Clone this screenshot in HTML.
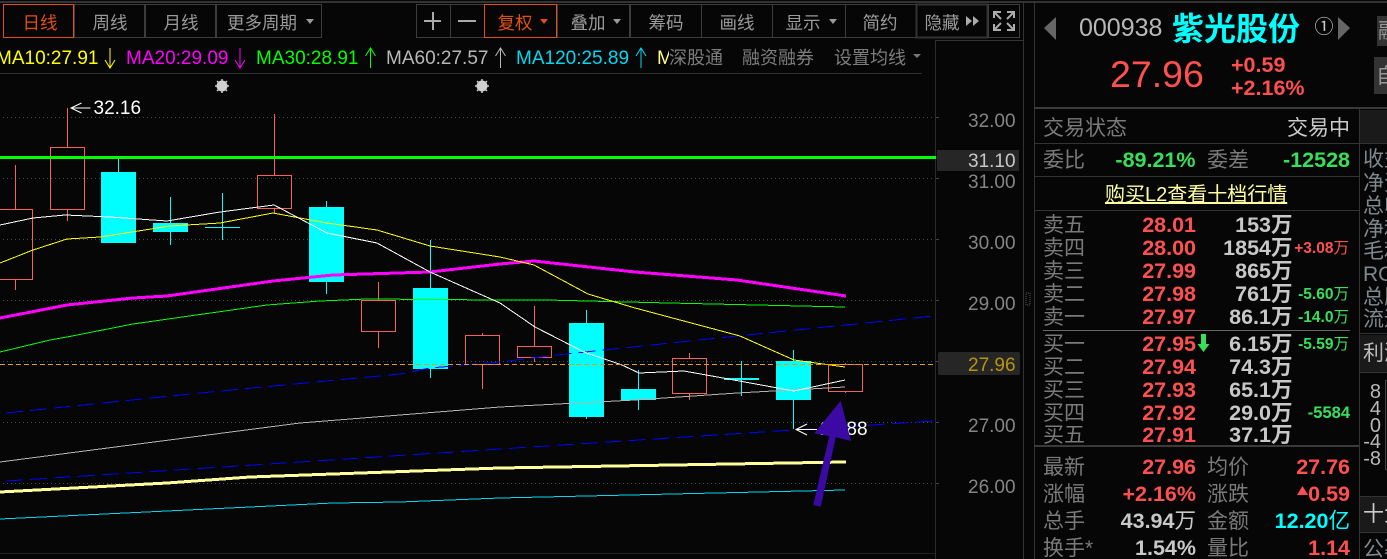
<!DOCTYPE html>
<html><head><meta charset="utf-8">
<style>
html,body{margin:0;padding:0;background:#060606;width:1387px;height:559px;overflow:hidden}
svg{display:block}
text{font-family:"Liberation Sans","Noto Sans CJK SC",sans-serif;white-space:pre}
.l{font-size:21px;fill:#7a7a7a}
.b{font-size:17.5px;fill:#9a9a9a;text-anchor:middle}
.ma{font-size:19px}
.ax{font-size:19px;fill:#858585}
.r{font-size:21.5px;font-weight:bold;fill:#ff5050;text-anchor:end}
.g{font-size:21.5px;font-weight:bold;fill:#38e05a;text-anchor:end}
.w{font-size:21.5px;font-weight:bold;fill:#c8c8c8;text-anchor:end}
.dr{font-size:15.5px;font-weight:bold;fill:#ff5050;text-anchor:end}
.dg{font-size:15.5px;font-weight:bold;fill:#38e05a;text-anchor:end}
.n{font-weight:normal}
.c{font-size:21px;fill:#80888f}
.btn{fill:none;stroke:#3c3c3c}
.rb{fill:none;stroke:#f86060}
.rw{stroke:#f86060}
.cb{fill:#00ffff}
.cw{stroke:#00ffff}
.grid{stroke:#484848;stroke-dasharray:1 3}
polyline{fill:none;shape-rendering:crispEdges}
</style></head><body>
<svg width="1387" height="559" viewBox="0 0 1387 559" xmlns="http://www.w3.org/2000/svg">
<defs>
<clipPath id="rc"><rect x="1360" y="0" width="27" height="559"/></clipPath>
<clipPath id="mc"><rect x="0" y="40" width="669" height="30"/></clipPath>
</defs>
<rect width="1387" height="559" fill="#060606"/>
<rect x="0" y="1" width="1387" height="2" fill="#333"/>

<!-- toolbar -->
<g shape-rendering="crispEdges">
<rect class="btn" x="74.5" y="4.5" width="70" height="33"/>
<rect class="btn" x="145.5" y="4.5" width="70" height="33"/>
<rect class="btn" x="216.5" y="4.5" width="105" height="33"/>
<rect class="btn" x="416.5" y="4.5" width="34" height="33"/>
<rect class="btn" x="450.5" y="4.5" width="34" height="33"/>
<rect class="btn" x="557.5" y="4.5" width="72" height="33"/>
<rect class="btn" x="630.5" y="4.5" width="71" height="33"/>
<rect class="btn" x="701.5" y="4.5" width="71" height="33"/>
<rect class="btn" x="772.5" y="4.5" width="73" height="33"/>
<rect class="btn" x="845.5" y="4.5" width="71" height="33"/>
<rect x="916.5" y="4.5" width="71" height="33" fill="none" stroke="#333" stroke-width="2"/>
<rect class="btn" x="988.5" y="4.5" width="31" height="33"/>
<rect x="3.5" y="4.5" width="70" height="33" fill="none" stroke="#e2500f"/>
<rect x="484.5" y="4.5" width="72" height="33" fill="none" stroke="#e2500f"/>
</g>
<text class="b" x="40" y="29" style="fill:#e2500f">日线</text>
<text class="b" x="110" y="29">周线</text>
<text class="b" x="181" y="29">月线</text>
<text class="b" x="262" y="29">更多周期</text>
<polygon points="306,19 314,19 310,24" fill="#999"/>
<rect x="424" y="20" width="17" height="2" fill="#aaa"/><rect x="432" y="12" width="2" height="18" fill="#aaa"/>
<rect x="458" y="20" width="18" height="2" fill="#aaa"/>
<text class="b" x="515" y="29" style="fill:#e2500f">复权</text>
<polygon points="540,19 548,19 544,24" fill="#e2500f"/>
<text class="b" x="588" y="29">叠加</text>
<polygon points="613,19 621,19 617,24" fill="#999"/>
<text class="b" x="666" y="29">筹码</text>
<text class="b" x="737" y="29">画线</text>
<text class="b" x="803" y="29">显示</text>
<polygon points="829,19 837,19 833,24" fill="#999"/>
<text class="b" x="880" y="29">简约</text>
<text class="b" x="942" y="29">隐藏</text>
<polygon points="966,16 966,26 972,21" fill="#aaa"/><polygon points="973,16 973,26 979,21" fill="#aaa"/>
<g fill="none" stroke="#aaa" stroke-width="2">
<path d="M994 18V12H1001M995 13L1001 19"/>
<path d="M1014 18V12H1007M1013 13L1007 19"/>
<path d="M994 24V30H1001M995 29L1001 23"/>
<path d="M1014 24V30H1007M1013 29L1007 23"/>
</g>

<!-- structure lines -->
<g shape-rendering="crispEdges">
<rect x="935" y="40" width="1" height="519" fill="#2c2c2c"/>
<rect x="935" y="40" width="88" height="1" fill="#333"/>
<rect x="1023" y="3" width="1" height="556" fill="#333"/>
<rect x="1034" y="3" width="1" height="556" fill="#333"/>
<rect x="0" y="73" width="922" height="1" fill="#2e2e2e"/>
<rect x="0" y="553" width="935" height="1" fill="#222"/>
</g>
<g fill="#555"><rect x="1026" y="293" width="4" height="12" fill="none" stroke="#555" stroke-dasharray="1 1"/></g>

<!-- MA row -->
<g clip-path="url(#mc)">
<text class="ma" x="-4" y="64" fill="#ffff00">MA10:27.91</text>
<text class="ma" x="126" y="64" fill="#ff00ff">MA20:29.09</text>
<text class="ma" x="256" y="64" fill="#00ff00">MA30:28.91</text>
<text class="ma" x="386" y="64" fill="#b8b8b8">MA60:27.57</text>
<text class="ma" x="516" y="64" fill="#00d8f0">MA120:25.89</text>
<text class="ma" x="657" y="64" fill="#ffff80">MA</text>
</g>
<g fill="none">
<path d="M110 48V68M105 60L110 68L115 60" stroke="#ffff00"/>
<path d="M240 48V68M235 60L240 68L245 60" stroke="#ff00ff"/>
<path d="M370.500 48V68M365.500 56L370.500 48L375.500 56" stroke="#00ff00"/>
<path d="M500.500 48V68M495.500 56L500.500 48L505.500 56" stroke="#b8b8b8"/>
<path d="M641 48V68M636 56L641 48L646 56" stroke="#00d8f0"/>
</g>
<text x="669" y="64" font-size="18" fill="#7d7d7d">深股通</text>
<text x="742" y="64" font-size="18" fill="#7d7d7d">融资融券</text>
<text x="834" y="64" font-size="18" fill="#7d7d7d">设置均线</text>
<polygon points="913,54 921,54 917,58" fill="#777"/>

<!-- grid -->
<g shape-rendering="crispEdges">
<path class="grid" d="M3 117.500H934M3 178.500H934M3 239.500H934M3 300.500H934M3 361.500H934M3 422.500H934M3 483.500H934"/>
<path stroke="#444" d="M936 117.500H939M936 178.500H939M936 239.500H939M936 300.500H939M936 361.500H939M936 422.500H939M936 483.500H939"/>
</g>

<!-- sun marks -->
<g fill="#d0d0d0" stroke="#d0d0d0">
<g transform="translate(222,86)"><circle r="5"/><path d="M-7 0H7M0 -7V7M-5 -5L5 5M-5 5L5 -5" stroke-width="1.500"/></g>
<g transform="translate(482,86)"><circle r="5"/><path d="M-7 0H7M0 -7V7M-5 -5L5 5M-5 5L5 -5" stroke-width="1.500"/></g>
</g>

<!-- candles -->
<g shape-rendering="crispEdges">
<path class="rw" d="M15.500 165V209M15.500 280V290M67.500 108V147M67.500 210V221M274.500 114V175M274.500 209V214M378.500 282V300M378.500 332V348M482.500 333V335M482.500 364V389M534.500 306V346M534.500 357V362M689.500 353V358M689.500 393V400M845.500 363V365M845.500 392V393"/>
<rect class="rb" x="-5.500" y="209.500" width="38" height="70"/>
<rect class="rb" x="50.500" y="147.500" width="34" height="62"/>
<rect class="rb" x="257.500" y="175.500" width="34" height="33"/>
<rect class="rb" x="361.500" y="300.500" width="34" height="31"/>
<rect class="rb" x="465.500" y="335.500" width="34" height="29"/>
<rect class="rb" x="517.500" y="346.500" width="34" height="11"/>
<rect class="rb" x="672.500" y="358.500" width="34" height="35"/>
<rect class="rb" x="828.500" y="364.500" width="34" height="27"/>
<path class="cw" d="M118.500 158V172M170.500 197V245M222.500 193V240M205 227.500H240M326.500 201V294M430.500 240V378M586.500 310V419M638.500 370V410M741.500 361V396M793.500 350V429"/>
<rect class="cb" x="101" y="172" width="35" height="71"/>
<rect class="cb" x="153" y="223" width="35" height="9"/>
<rect class="cb" x="309" y="207" width="35" height="75"/>
<rect class="cb" x="413" y="288" width="35" height="81"/>
<rect class="cb" x="569" y="323" width="35" height="94"/>
<rect class="cb" x="621" y="389" width="35" height="11"/>
<rect class="cb" x="724" y="378" width="35" height="2"/>
<rect class="cb" x="776" y="361" width="35" height="39"/>
</g>

<!-- MA lines -->
<polyline stroke="#0000ff" stroke-dasharray="17 7" points="6,413 200,393 400,374 430,368 500,362 557,355 737,336 934,316"/>
<polyline stroke="#0000ff" stroke-dasharray="17 7" points="6,481 500,449 793,430 934,421"/>
<polyline stroke="#b4b4b4" points="0,462 300,423 500,407 635,400 737,393 845,387"/>
<polyline stroke="#00ff00" points="0,352 50,340 67,337 133,324 267,305 320,301 367,299 500,300 547,300 669,303 845,307"/>
<polyline stroke="#ff00ff" stroke-width="3" points="0,318 67,305 133,298 167,296 273,281 333,275 430,272 500,264 534,261 635,272 737,280 846,296"/>
<polyline stroke="#ffff00" points="0,263 33,250 67,239 100,237 170,226 220,223 273,213 327,223 377,230 430,246 500,257 534,265 588,294 635,308 740,336 794,360 845,367"/>
<polyline stroke="#ffffff" points="0,225 33,218 65,215 110,217 167,221 220,212 274,205 327,233 377,243 430,272 500,303 535,327 584,352 622,365 639,373 684,371 723,378 794,391 845,380"/>
<polyline stroke="#ffff99" stroke-width="3" points="0,492 167,483 250,477 333,474 500,468 846,462"/>
<polyline stroke="#00d8f0" points="0,519 167,511 333,503 400,502 500,498 845,490"/>

<!-- special lines -->
<rect x="0" y="156" width="936" height="3" fill="#00ff00"/>
<line x1="0" y1="364.500" x2="935" y2="364.500" stroke="#e0a000" stroke-dasharray="5 3" shape-rendering="crispEdges"/>

<!-- labels -->
<path d="M90.500 108H71M81.500 103L71 108L81.500 113" fill="none" stroke="#fff"/>
<text x="93.500" y="114" font-size="19" fill="#fff">32.16</text>
<path d="M817 429.500H796M807 424L796 429.500L807 435" fill="none" stroke="#fff"/>
<text x="820" y="435" font-size="19" fill="#fff">26.88</text>
<polygon points="840.700,400.700 814.300,433.300 829.300,436 813.300,505 820.700,506.700 835.700,437.300 851,441" fill="#3b0aa5"/>

<!-- axis -->
<text class="ax" x="968" y="127">32.00</text>
<text class="ax" x="968" y="188">31.00</text>
<text class="ax" x="968" y="249">30.00</text>
<text class="ax" x="968" y="310">29.00</text>
<text class="ax" x="968" y="432">27.00</text>
<text class="ax" x="968" y="493">26.00</text>
<rect x="937" y="150" width="82" height="21" fill="#262626"/>
<text class="ax" x="968" y="167" style="fill:#c8c8c8">31.10</text>
<rect x="938" y="352" width="82" height="23" rx="2" fill="#262626"/>
<text class="ax" x="968" y="371" style="fill:#b8960c">27.96</text>

<!-- header right -->
<polygon points="1056,17 1056,40 1044,28" fill="#666"/>
<polygon points="1338,17 1338,40 1350,28" fill="#666"/>
<text x="1079" y="36" font-size="25" fill="#b8b8b8">000938</text>
<text x="1172" y="40" font-size="32" font-weight="bold" fill="#00ffff">紫光股份</text>
<text x="1324" y="33" font-size="19" fill="#ccc" text-anchor="middle">①</text>
<text x="1110" y="87" font-size="37.500" fill="#ff5050">27.96</text>
<text x="1231" y="72" font-size="21.500" font-weight="bold" fill="#ff5050">+0.59</text>
<text x="1231" y="95" font-size="21.500" font-weight="bold" fill="#ff5050">+2.16%</text>
<rect x="1377" y="16" width="10" height="30" fill="#333"/>
<text x="1378" y="38" font-size="21" fill="#999">融</text>
<rect x="1374" y="57" width="13" height="37" fill="#333"/>
<text x="1376" y="83" font-size="21" fill="#999">自</text>

<g shape-rendering="crispEdges">
<rect x="1034" y="107" width="353" height="2" fill="#3a3a3a"/>
<rect x="1360" y="110" width="27" height="33" fill="#1a1a1a"/>
<rect x="1359" y="109" width="1" height="450" fill="#333"/>
<rect x="1034" y="143" width="353" height="1" fill="#333"/>
<rect x="1034" y="176" width="325" height="1" fill="#333"/>
<rect x="1034" y="210" width="325" height="1" fill="#333"/>
<rect x="1043" y="330" width="307" height="1" fill="#666"/>
<rect x="1034" y="445" width="325" height="2" fill="#3a3a3a"/>
</g>
<text class="l" x="1043" y="135">交易状态</text>
<text x="1350" y="135" font-size="21" fill="#ccc" text-anchor="end">交易中</text>
<text class="l" x="1043" y="167">委比</text>
<text class="g" x="1195.500" y="167">-89.21%</text>
<text class="l" x="1207" y="167">委差</text>
<text class="g" x="1350" y="167">-12528</text>
<text x="1105" y="201" font-size="20" fill="#ffffa0" text-decoration="underline">购买L2查看十档行情</text>

<!-- order book -->
<text class="l" x="1043" y="232">卖五</text><text class="r" x="1196" y="232">28.01</text><text class="w" x="1292.500" y="232">153万</text>
<text class="l" x="1043" y="255">卖四</text><text class="r" x="1196" y="255">28.00</text><text class="w" x="1292.500" y="255">1854万</text><text class="dr" x="1349" y="253">+3.08<tspan class="n">万</tspan></text>
<text class="l" x="1043" y="278">卖三</text><text class="r" x="1196" y="278">27.99</text><text class="w" x="1292.500" y="278">865万</text>
<text class="l" x="1043" y="301">卖二</text><text class="r" x="1196" y="301">27.98</text><text class="w" x="1292.500" y="301">761万</text><text class="dg" x="1349" y="299">-5.60<tspan class="n">万</tspan></text>
<text class="l" x="1043" y="324">卖一</text><text class="r" x="1196" y="324">27.97</text><text class="w" x="1292.500" y="324">86.1万</text><text class="dg" x="1349" y="322">-14.0<tspan class="n">万</tspan></text>
<text class="l" x="1043" y="351">买一</text><text class="r" x="1196" y="351">27.95</text><text class="w" x="1292.500" y="351">6.15万</text><text class="dg" x="1349" y="349">-5.59<tspan class="n">万</tspan></text>
<polygon points="1201,334 1206,334 1206,344 1209.500,344 1203.500,352 1197.500,344 1201,344" fill="#38e05a"/>
<text class="l" x="1043" y="374">买二</text><text class="r" x="1196" y="374">27.94</text><text class="w" x="1292.500" y="374">74.3万</text>
<text class="l" x="1043" y="397">买三</text><text class="r" x="1196" y="397">27.93</text><text class="w" x="1292.500" y="397">65.1万</text>
<text class="l" x="1043" y="420">买四</text><text class="r" x="1196" y="420">27.92</text><text class="w" x="1292.500" y="420">29.0万</text><text class="dg" x="1350" y="418" style="font-size:16.5px">-5584</text>
<text class="l" x="1043" y="442">买五</text><text class="r" x="1196" y="442">27.91</text><text class="w" x="1292.500" y="442">37.1万</text>

<!-- bottom stats -->
<text class="l" x="1043" y="474">最新</text><text class="r" x="1196" y="474">27.96</text>
<text class="l" x="1207" y="474">均价</text><text class="r" x="1350" y="474">27.76</text>
<text class="l" x="1043" y="501">涨幅</text><text class="r" x="1196" y="501">+2.16%</text>
<text class="l" x="1207" y="501">涨跌</text><text class="r" x="1350" y="501">0.59</text>
<polygon points="1297,495 1308,495 1302.500,486" fill="#ff5050"/>
<text class="l" x="1043" y="528">总手</text><text class="w" x="1196" y="528">43.94<tspan class="n">万</tspan></text>
<text class="l" x="1207" y="528">金额</text><text class="r" x="1350" y="528" style="fill:#00ffff">12.20<tspan class="n">亿</tspan></text>
<text class="l" x="1043" y="555">换手*</text><text class="w" x="1196" y="555">1.54%</text>
<text class="l" x="1207" y="555">量比</text><text class="r" x="1350" y="555">1.14</text>

<!-- right column -->
<g clip-path="url(#rc)">
<text class="c" x="1363" y="166">收益</text>
<text class="c" x="1363" y="190">净资</text>
<text class="c" x="1363" y="213">总收</text>
<text class="c" x="1363" y="236">净利</text>
<text class="c" x="1363" y="258">毛利</text>
<text class="c" x="1363" y="281">ROE</text>
<text class="c" x="1363" y="304">总股</text>
<text class="c" x="1363" y="326">流通</text>
<rect x="1360" y="333" width="27" height="1" fill="#333"/>
<rect x="1360" y="335" width="27" height="37" fill="#1a1a1a"/>
<text x="1363" y="360" font-size="21" fill="#bbb">利润</text>
<rect x="1360" y="372" width="27" height="1" fill="#333"/>
<text x="1381" y="398" font-size="20" fill="#b8b8b8" text-anchor="end">8</text>
<text x="1381" y="415" font-size="20" fill="#b8b8b8" text-anchor="end">4</text>
<text x="1381" y="432" font-size="20" fill="#b8b8b8" text-anchor="end">0</text>
<text x="1381" y="448" font-size="20" fill="#b8b8b8" text-anchor="end">-4</text>
<text x="1381" y="465" font-size="20" fill="#b8b8b8" text-anchor="end">-8</text>
<rect x="1385.500" y="380.500" width="10" height="89" fill="none" stroke="#444"/>
<rect x="1360" y="497" width="27" height="35" fill="#1a1a1a"/>
<rect x="1360" y="496" width="27" height="1" fill="#333"/>
<rect x="1360" y="532" width="27" height="1" fill="#333"/>
<text x="1363" y="521" font-size="21" fill="#ccc">十大</text>
<text class="c" x="1363" y="556">公募</text>
</g>
</svg>
</body></html>
